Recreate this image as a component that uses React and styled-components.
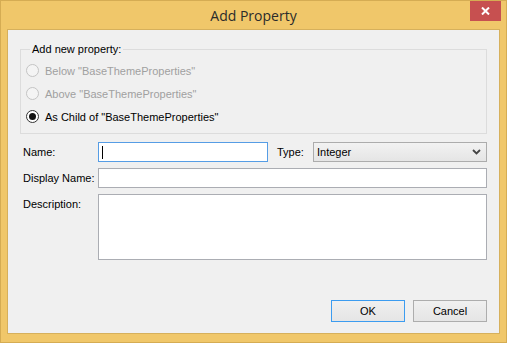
import React from 'react';
import styled, { createGlobalStyle } from 'styled-components';

const GlobalStyle = createGlobalStyle`
  html, body {
    margin: 0;
    padding: 0;
    width: 507px;
    height: 343px;
    overflow: hidden;
    background: #f0c76a;
  }
  * {
    box-sizing: border-box;
  }
`;

const options = [
  { label: 'Below "BaseThemeProperties"', disabled: true },
  { label: 'Above "BaseThemeProperties"', disabled: true },
  { label: 'As Child of "BaseThemeProperties"', checked: true },
];

const App = () => (
  <>
    <GlobalStyle />
    <Window>
      <TitleBar>
        <Title>Add Property</Title>
        <CloseButton aria-label="Close">
          <svg width="9" height="8" viewBox="0 0 9 8">
            <path d="M1 0.5 L8 7.5 M8 0.5 L1 7.5" stroke="#fff" strokeWidth="2" />
          </svg>
        </CloseButton>
      </TitleBar>

      <Client>
        <Group>
          <Legend>Add new property:</Legend>
          {options.map((opt) => (
            <RadioRow key={opt.label} disabled={opt.disabled}>
              <RadioCircle disabled={opt.disabled} checked={opt.checked} />
              {opt.label}
            </RadioRow>
          ))}
        </Group>

        <Form>
          <Label>Name:</Label>
          <NameRow>
            <TextBox focused width="170px">
              <Caret />
            </TextBox>
            <TypeLabel>Type:</TypeLabel>
            <ComboBox>
              Integer
              <svg width="9" height="6" viewBox="0 0 9 6">
                <path d="M1 1 L4.5 4.5 L8 1" stroke="#444" strokeWidth="1.8" fill="none" />
              </svg>
            </ComboBox>
          </NameRow>

          <Label>Display Name:</Label>
          <TextBox />

          <Label top>Description:</Label>
          <TextBox height="66px" />
        </Form>

        <ButtonRow>
          <Button primary>OK</Button>
          <Button>Cancel</Button>
        </ButtonRow>
      </Client>
    </Window>
  </>
);

export default App;

const Window = styled.div`
  width: 507px;
  height: 343px;
  border: 1px solid #d5ac53;
  background: #f0c76a;
  display: flex;
  flex-direction: column;
  font-family: "Liberation Sans", Arial, sans-serif;
  font-size: 11px;
  color: #000;
`;

const TitleBar = styled.div`
  position: relative;
  height: 28px;
  flex-shrink: 0;
  display: flex;
  align-items: center;
  justify-content: center;
`;

const Title = styled.div`
  font-family: "Open Sans", "Noto Sans", sans-serif;
  font-size: 14px;
  color: #2b2b2b;
  padding-top: 1px;
`;

const CloseButton = styled.div`
  position: absolute;
  top: 0;
  right: 5px;
  width: 31px;
  height: 20px;
  background: #c75050;
  display: flex;
  align-items: center;
  justify-content: center;
`;

const Client = styled.div`
  flex: 1;
  margin: 0 6px 8px 6px;
  border: 1px solid #d6b05c;
  background: #f0f0f0;
  padding: 13px 12px 11px 12px;
  display: flex;
  flex-direction: column;
`;

const Group = styled.fieldset`
  margin: 0;
  padding: 3px 5px 5px 5px;
  border: 1px solid #dcdcdc;
  min-width: 0;
`;

const Legend = styled.legend`
  margin-left: 4px;
  padding: 0 2px;
  line-height: 13px;
  font-size: 11px;
  color: #000;
`;

const RadioRow = styled.div`
  height: 23px;
  display: flex;
  align-items: center;
  gap: 6px;
  color: ${(p) => (p.disabled ? '#a0a0a0' : '#000')};
`;

const RadioCircle = styled.span`
  width: 13px;
  height: 13px;
  border-radius: 50%;
  border: 1px solid ${(p) => (p.disabled ? '#c4c4c4' : '#333')};
  background: ${(p) => (p.disabled ? '#f4f4f4' : '#fff')};
  display: flex;
  align-items: center;
  justify-content: center;
  flex-shrink: 0;

  &::after {
    content: '';
    display: ${(p) => (p.checked ? 'block' : 'none')};
    width: 7px;
    height: 7px;
    border-radius: 50%;
    background: #111;
  }
`;

const Form = styled.div`
  margin-top: 8px;
  padding-left: 3px;
  display: grid;
  grid-template-columns: 75px 1fr;
  row-gap: 6px;
  align-items: center;
`;

const Label = styled.div`
  align-self: ${(p) => (p.top ? 'start' : 'center')};
  padding-top: ${(p) => (p.top ? '4px' : '0')};
`;

const NameRow = styled.div`
  display: flex;
  align-items: center;
`;

const TextBox = styled.div`
  width: ${(p) => p.width || 'auto'};
  height: ${(p) => p.height || '20px'};
  flex-shrink: 0;
  background: #fff;
  border: 1px solid ${(p) => (p.focused ? '#569de5' : '#abadb3')};
  display: flex;
  align-items: center;
  padding-left: 3px;
`;

const Caret = styled.span`
  width: 1px;
  height: 13px;
  background: #000;
`;

const TypeLabel = styled.div`
  width: 36px;
  margin-left: 9px;
  flex-shrink: 0;
`;

const ComboBox = styled.div`
  flex: 1;
  height: 20px;
  border: 1px solid #acacac;
  background: linear-gradient(#f2f2f2, #e5e5e5);
  display: flex;
  align-items: center;
  justify-content: space-between;
  padding: 0 5px 0 3px;
`;

const ButtonRow = styled.div`
  margin-top: auto;
  display: flex;
  justify-content: flex-end;
  gap: 8px;
`;

const Button = styled.div`
  width: 74px;
  height: 22px;
  border: 1px solid ${(p) => (p.primary ? '#3c9cf0' : '#adadad')};
  background: linear-gradient(#f0f0f0, #e5e5e5);
  display: flex;
  align-items: center;
  justify-content: center;
`;
